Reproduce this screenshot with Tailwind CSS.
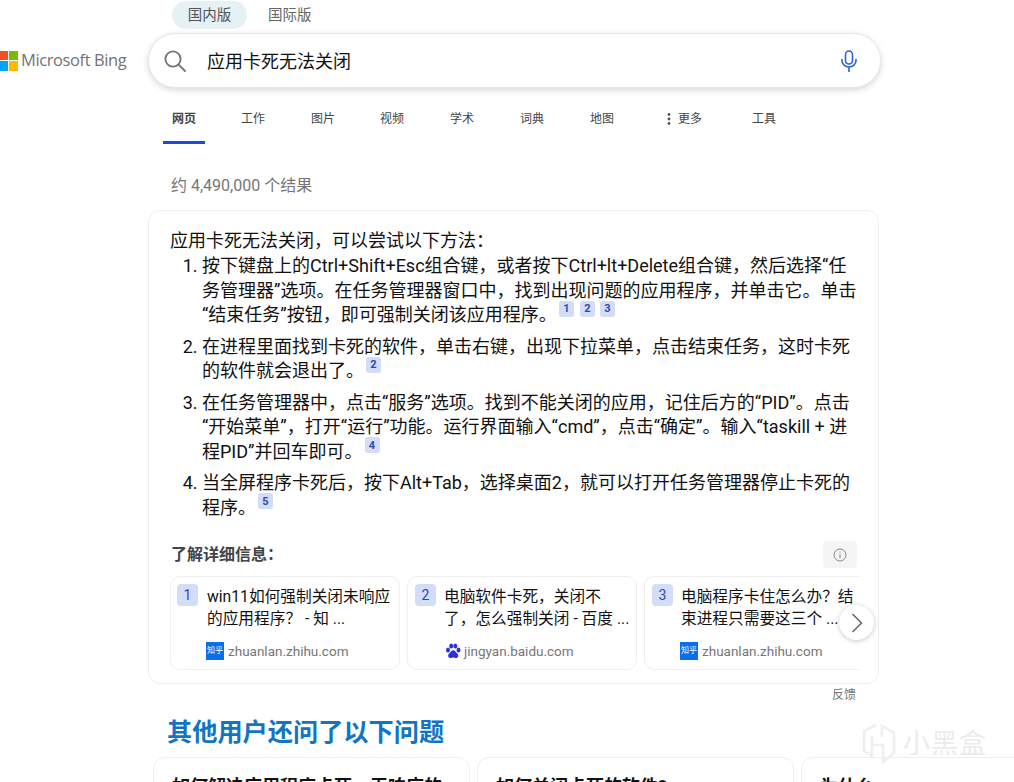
<!DOCTYPE html>
<html lang="zh">
<head>
<meta charset="utf-8">
<script src="https://cdn.jsdelivr.net/npm/@tailwindcss/browser@4"></script>
</head>
<body class="bg-white">
<div class="relative h-[782px] w-[1014px] overflow-hidden bg-white text-[#111] font-['Roboto','Noto_Sans_CJK_SC',sans-serif]">

  <div class="flex h-[33px] items-start pl-[172px] pt-[2px] text-[14.5px] text-[#666]">
    <div class="-mt-px flex h-[28px] w-[75px] items-center justify-center rounded-full bg-[#e6f1f6] pt-[1px] text-[#555]">国内版</div>
    <div class="-mt-px ml-[21px] flex h-[28px] items-center pt-[1px]">国际版</div>
  </div>

  <div class="flex h-[55px] items-center">
    <div class="flex w-[148px] shrink-0 items-center">
      <div class="-ml-[2px] grid h-[20px] w-[20px] shrink-0 grid-cols-2 gap-[1px]">
        <span class="bg-[#f25022]"></span><span class="bg-[#7fba00]"></span><span class="bg-[#00a4ef]"></span><span class="bg-[#ffb900]"></span>
      </div>
      <span class="ml-[3px] whitespace-nowrap font-['Open_Sans',sans-serif] text-[16.5px] font-medium tracking-[-0.4px] text-[#737373]">Microsoft Bing</span>
    </div>
    <div class="flex h-[55px] w-[733px] items-center rounded-[28px] border border-[#e8e8e8] bg-white pl-[15px] pr-[23px] shadow-[0_2px_6px_rgba(0,0,0,0.16)]">
      <svg class="h-[22px] w-[22px] shrink-0" viewBox="0 0 22 22" fill="none" stroke="#767676" stroke-width="1.9"><circle cx="9" cy="9" r="7.6"/><path d="M14.6 14.6 L21 21" stroke-linecap="round"/></svg>
      <span class="ml-[21px] flex-1 pt-[2px] text-[18px] text-[#111]">应用卡死无法关闭</span>
      <svg class="h-[22px] w-[16px] shrink-0" viewBox="0 0 16 22" fill="none" stroke="#2a5fe0" stroke-width="1.6"><rect x="4.5" y="1" width="7" height="13" rx="3.5"/><path d="M1 9.5 V10.5 a7 6.5 0 0 0 14 0 V9.5 M8 17 V21.5" stroke-linecap="round"/></svg>
    </div>
  </div>

  <nav class="flex h-[56px] pl-[163px] text-[12px] text-[#444]">
    <div class="flex h-full w-[42px] items-center justify-center border-b-[3px] border-[#174ae4] pt-[8px] font-bold">网页</div>
    <div class="ml-[28px] flex h-full items-center px-[8px] pt-[5px]">工作</div>
    <div class="ml-[30px] flex h-full items-center px-[8px] pt-[5px]">图片</div>
    <div class="ml-[29px] flex h-full items-center px-[8px] pt-[5px]">视频</div>
    <div class="ml-[30px] flex h-full items-center px-[8px] pt-[5px]">学术</div>
    <div class="ml-[30px] flex h-full items-center px-[8px] pt-[5px]">词典</div>
    <div class="ml-[30px] flex h-full items-center px-[8px] pt-[5px]">地图</div>
    <div class="ml-[37px] flex h-full items-center px-[8px] pt-[5px]">
      <svg class="mr-[7px] h-[12px] w-[4px]" viewBox="0 0 4 12" fill="#555"><circle cx="2" cy="1.5" r="1.4"/><circle cx="2" cy="6" r="1.4"/><circle cx="2" cy="10.5" r="1.4"/></svg>更多
    </div>
    <div class="ml-[34px] flex h-full items-center px-[8px] pt-[5px]">工具</div>
  </nav>

  <div class="flex h-[66px] items-start pl-[171px] pt-[33px] text-[16px] leading-[18px] text-[#767676]">约 4,490,000 个结果</div>

  <section class="ml-[148px] box-border h-[474px] w-[731px] rounded-[12px] border border-[#eeeeee] pl-[22px] pr-[21px] pt-[17px]">
    <p class="-ml-px text-[18px] leading-[25px]">应用卡死无法关闭，可以尝试以下方法：</p>
    <ol class="mt-px flex list-decimal flex-col gap-[7px] pl-[31px] text-[18px] leading-[24.5px]">
      <li>按下键盘上的Ctrl+Shift+Esc组合键，或者按下Ctrl+lt+Delete组合键，然后选择“任<br>务管理器”选项。在任务管理器窗口中，找到出现问题的应用程序，并单击它。单击<br>“结束任务”按钮，即可强制关闭该应用程序。<span class="ml-[2px] inline-flex h-[16px] w-[15px] -translate-y-[4px] items-center justify-center rounded-[3px] bg-[#d3dcf9] align-[5px] text-[11px] font-bold leading-none text-[#2b4bb0]">1</span><span class="ml-[6px] inline-flex h-[16px] w-[15px] -translate-y-[4px] items-center justify-center rounded-[3px] bg-[#d3dcf9] align-[5px] text-[11px] font-bold leading-none text-[#2b4bb0]">2</span><span class="ml-[5px] inline-flex h-[16px] w-[15px] -translate-y-[4px] items-center justify-center rounded-[3px] bg-[#d3dcf9] align-[5px] text-[11px] font-bold leading-none text-[#2b4bb0]">3</span></li>
      <li>在进程里面找到卡死的软件，单击右键，出现下拉菜单，点击结束任务，这时卡死<br>的软件就会退出了。<span class="ml-[2px] inline-flex h-[16px] w-[15px] -translate-y-[4px] items-center justify-center rounded-[3px] bg-[#d3dcf9] align-[5px] text-[11px] font-bold leading-none text-[#2b4bb0]">2</span></li>
      <li>在任务管理器中，点击“服务”选项。找到不能关闭的应用，记住后方的“PID”。点击<br>“开始菜单”，打开“运行”功能。运行界面输入“cmd”，点击“确定”。输入“taskill + 进<br>程PID”并回车即可。<span class="ml-[2px] inline-flex h-[16px] w-[15px] -translate-y-[4px] items-center justify-center rounded-[3px] bg-[#d3dcf9] align-[5px] text-[11px] font-bold leading-none text-[#2b4bb0]">4</span></li>
      <li>当全屏程序卡死后，按下Alt+Tab，选择桌面2，就可以打开任务管理器停止卡死的<br>程序。<span class="ml-[2px] inline-flex h-[16px] w-[15px] -translate-y-[4px] items-center justify-center rounded-[3px] bg-[#d3dcf9] align-[5px] text-[11px] font-bold leading-none text-[#2b4bb0]">5</span></li>
    </ol>

    <div class="mt-[21px] flex h-[27px] items-center justify-between">
      <h3 class="text-[16px] font-bold text-[#444]">了解详细信息：</h3>
      <div class="flex h-[27px] w-[34px] items-center justify-center rounded-[4px] bg-[#f5f5f5]">
        <svg class="h-[14px] w-[14px]" viewBox="0 0 14 14" fill="none" stroke="#8a8a8a" stroke-width="1"><circle cx="7" cy="7" r="6"/><path d="M7 6 V10.5 M7 3.5 V4.7"/></svg>
      </div>
    </div>

    <div class="relative -ml-px mt-[8px] w-[689px]">
      <div class="flex w-[689px] gap-[7px] overflow-hidden">
        <article class="box-border flex h-[94px] w-[230px] shrink-0 rounded-[10px] border border-[#eeeeee] pl-[6px] pt-[7px]">
          <span class="flex h-[22px] w-[21px] shrink-0 items-center justify-center rounded-[4px] bg-[#d3dcf9] text-[14px] text-[#2b4bb0]">1</span>
          <div class="ml-[9px] min-w-0 pt-[2px]">
            <p class="whitespace-nowrap text-[15.7px] leading-[22px]">win11如何强制关闭未响应<br>的应用程序？ - 知 ...</p>
            <div class="mt-[12px] flex items-center text-[13.5px] leading-[18px] text-[#767676]">
              <span class="mr-[3px] flex h-[18px] w-[18px] -translate-x-px items-center justify-center bg-[#0a6fe8] text-[8px] leading-none text-white">知乎</span>zhuanlan.zhihu.com
            </div>
          </div>
        </article>
        <article class="box-border flex h-[94px] w-[230px] shrink-0 rounded-[10px] border border-[#eeeeee] pl-[7px] pt-[7px]">
          <span class="flex h-[22px] w-[21px] shrink-0 items-center justify-center rounded-[4px] bg-[#d3dcf9] text-[14px] text-[#2b4bb0]">2</span>
          <div class="ml-[8px] min-w-0 pt-[2px]">
            <p class="whitespace-nowrap text-[15.7px] leading-[22px]">电脑软件卡死，关闭不<br>了，怎么强制关闭 - 百度 ...</p>
            <div class="mt-[12px] flex items-center text-[13.5px] leading-[18px] text-[#767676]">
              <svg class="mr-[2px] h-[18px] w-[18px]" viewBox="0 0 18 18" fill="#2932e1"><ellipse cx="4" cy="8" rx="2" ry="2.6"/><ellipse cx="7.2" cy="4" rx="2" ry="2.6"/><ellipse cx="11.3" cy="4" rx="2" ry="2.6"/><ellipse cx="14.5" cy="8" rx="2" ry="2.6"/><path d="M9.2 8.2 c-2 0-2.6 2.2-4 3.2 c-1.8 1.3-1.2 4.8 1.6 4.6 c1 -.1 1.6-.4 2.4-.4 s1.5.3 2.5.4 c2.8.2 3.4-3.3 1.5-4.6 c-1.4-1-2-3.2-4-3.2z"/></svg>jingyan.baidu.com
            </div>
          </div>
        </article>
        <article class="box-border flex h-[94px] w-[230px] shrink-0 rounded-[10px] border border-[#eeeeee] pl-[7px] pt-[7px]">
          <span class="flex h-[22px] w-[21px] shrink-0 items-center justify-center rounded-[4px] bg-[#d3dcf9] text-[14px] text-[#2b4bb0]">3</span>
          <div class="ml-[8px] min-w-0 pt-[2px]">
            <p class="whitespace-nowrap text-[15.7px] leading-[22px]">电脑程序卡住怎么办？结<br>束进程只需要这三个 ...</p>
            <div class="mt-[12px] flex items-center text-[13.5px] leading-[18px] text-[#767676]">
              <span class="mr-[3px] flex h-[18px] w-[18px] -translate-x-px items-center justify-center bg-[#0a6fe8] text-[8px] leading-none text-white">知乎</span>zhuanlan.zhihu.com
            </div>
          </div>
        </article>
      </div>
      <div class="absolute right-[-15px] top-[29px] flex h-[35px] w-[35px] items-center justify-center rounded-full bg-white shadow-[0_1px_5px_rgba(0,0,0,0.22)]">
        <svg class="h-[20px] w-[12px]" viewBox="0 0 12 20" fill="none" stroke="#666" stroke-width="1.5"><path d="M1.5 1 L10.5 10 L1.5 19"/></svg>
      </div>
    </div>
  </section>

  <div class="flex h-[22px] w-[857px] items-center justify-end pr-px text-[12px] text-[#767676]">反馈</div>

  <h2 class="ml-[167px] mt-[11px] mb-[8px] text-[25.2px] font-bold leading-[32px] text-[#1174c4]">其他用户还问了以下问题</h2>

  <div class="ml-[153px] flex gap-[7px]">
    <div class="box-border h-[90px] w-[317px] shrink-0 rounded-[12px] border border-[#eeeeee] pl-[18px] pt-[17px] text-[18px] font-bold leading-[24px]">如何解决应用程序卡死，无响应的</div>
    <div class="box-border h-[90px] w-[317px] shrink-0 rounded-[12px] border border-[#eeeeee] pl-[18px] pt-[17px] text-[18px] font-bold leading-[24px]">如何关闭卡死的软件?</div>
    <div class="box-border h-[90px] w-[317px] shrink-0 rounded-[12px] border border-[#eeeeee] pl-[18px] pt-[17px] text-[18px] font-bold leading-[24px]">为什么</div>
  </div>

  <div class="absolute left-[862px] top-[723px] flex items-center gap-[7px]">
    <svg class="h-[41px] w-[34px]" viewBox="0 0 34 41" fill="none" stroke="#efefef" stroke-width="2.6"><path d="M14 2 L2 8 V28 L10 33 V13 M10 22 H21 V39 L32 30 V10 L20 3 V14"/></svg>
    <span class="pt-[2px] text-[27px] leading-none tracking-[1px] text-[#ececec]">小黑盒</span>
  </div>
</div>
</body>
</html>
